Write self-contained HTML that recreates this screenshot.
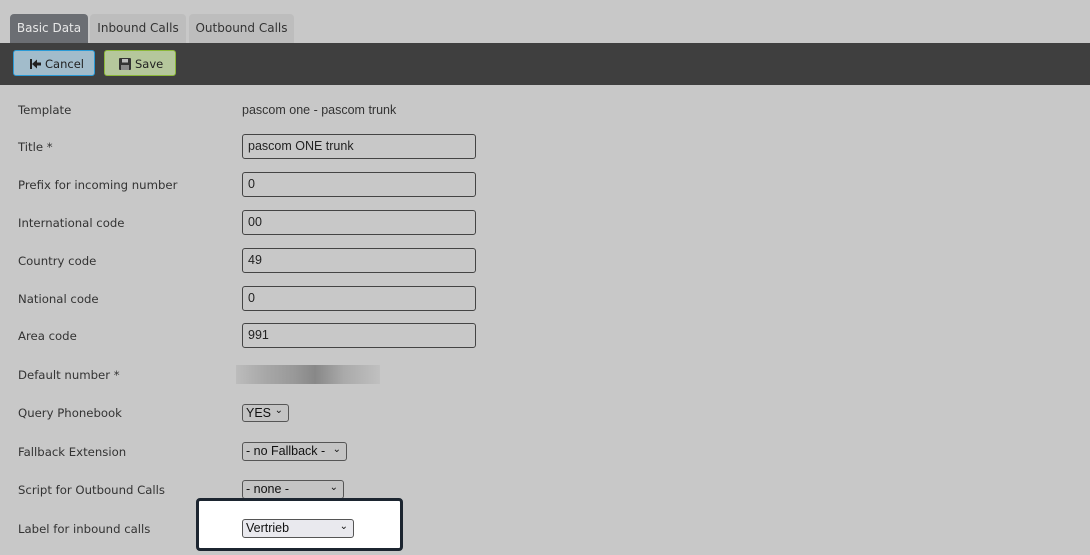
<!DOCTYPE html>
<html><head><style>
body{margin:0;width:1090px;height:555px;background:#c8c8c8;position:relative;overflow:hidden;font-family:"DejaVu Sans",Verdana,sans-serif;font-size:11.7px;color:#333}
.tab{position:absolute;top:14px;height:29px;border-radius:4px 4px 0 0;background:#bdbdbd;color:#333;line-height:29px;text-align:center;font-size:12px}
.bar{position:absolute;left:0;top:43px;width:1090px;height:42px;background:#3f3f3f}
.btn{position:absolute;top:50px;height:26px;border-radius:3px;font-size:11.5px;line-height:26px;color:#222}
.lbl{position:absolute;left:18px;transform:translateY(-50%);white-space:nowrap}
.inp{position:absolute;left:242px;border:1px solid #444;border-radius:3px;font-family:"Liberation Sans",Arial,sans-serif;font-size:12.5px;line-height:23px;padding-left:5px;box-sizing:border-box;width:234px;height:25px;color:#222}
.sel{position:absolute;left:242px;border:1px solid #555;border-radius:3px;font-family:"Liberation Sans",Arial,sans-serif;font-size:12.5px;box-sizing:border-box;padding-left:3px;color:#111;background:#c4c4c4}
.sel span{position:absolute;right:5px;top:-2px;font-size:10px}
</style></head><body>
<div class="tab" style="left:10px;width:78px;background:#6b6e73;color:#e8e8e8">Basic Data</div>
<div class="tab" style="left:90px;width:96px">Inbound Calls</div>
<div class="tab" style="left:189px;width:105px">Outbound Calls</div>
<div class="bar"></div>
<div class="btn" style="left:13px;width:82px;background:#a2bccb;border:1px solid #2a9ad6;box-sizing:border-box"><svg width="11" height="10" viewBox="0 0 11 10" style="position:absolute;left:16px;top:8px"><rect x="0" y="0" width="2" height="10" fill="#222"/><path d="M2 5 L7 0.5 L7 3.5 L11 3.5 L11 6.5 L7 6.5 L7 9.5 Z" fill="#222"/></svg><span style="position:absolute;left:31px">Cancel</span></div>
<div class="btn" style="left:104px;width:72px;background:#b5c79c;border:1px solid #8cb83a;box-sizing:border-box"><svg width="12" height="12" viewBox="0 0 12 12" style="position:absolute;left:14px;top:7px"><rect x="0" y="0" width="12" height="12" rx="1" fill="#333"/><rect x="3" y="1" width="6" height="3.5" fill="#bbb"/><rect x="2" y="7" width="8" height="5" fill="#888"/></svg><span style="position:absolute;left:30px">Save</span></div>

<div class="lbl" style="top:110px">Template</div>
<div class="lbl" style="left:242px;top:110px;font-family:'Liberation Sans',Arial,sans-serif;font-size:12.5px">pascom one - pascom trunk</div>
<div class="lbl" style="top:147px">Title *</div><div class="inp" style="top:134px">pascom ONE trunk</div>
<div class="lbl" style="top:185px">Prefix for incoming number</div><div class="inp" style="top:172px">0</div>
<div class="lbl" style="top:223px">International code</div><div class="inp" style="top:210px">00</div>
<div class="lbl" style="top:261px">Country code</div><div class="inp" style="top:248px">49</div>
<div class="lbl" style="top:299px">National code</div><div class="inp" style="top:286px">0</div>
<div class="lbl" style="top:336px">Area code</div><div class="inp" style="top:323px">991</div>
<div class="lbl" style="top:375px">Default number *</div>
<div style="position:absolute;left:236px;top:365px;width:144px;height:19px;background:linear-gradient(90deg,#bcbcbc,#a8a8a8 20%,#999 40%,#888 55%,#aaa 75%,#c0c0c0)"></div>
<div class="lbl" style="top:413px">Query Phonebook</div><div class="sel" style="top:404px;width:47px;height:18px;line-height:16px">YES<span>⌄</span></div>
<div class="lbl" style="top:452px">Fallback Extension</div><div class="sel" style="top:442px;width:105px;height:19px;line-height:17px">- no Fallback -<span>⌄</span></div>
<div class="lbl" style="top:490px">Script for Outbound Calls</div><div class="sel" style="top:480px;width:102px;height:19px;line-height:17px">- none -<span>⌄</span></div>
<div class="lbl" style="top:529px">Label for inbound calls</div>
<div style="position:absolute;left:196px;top:498px;width:207px;height:53px;background:#fff;border:3px solid #1c2530;border-radius:4px;box-sizing:border-box"></div>
<div class="sel" style="top:519px;width:112px;height:19px;line-height:17px;background:#e9e9ee">Vertrieb<span>⌄</span></div>
</body></html>
